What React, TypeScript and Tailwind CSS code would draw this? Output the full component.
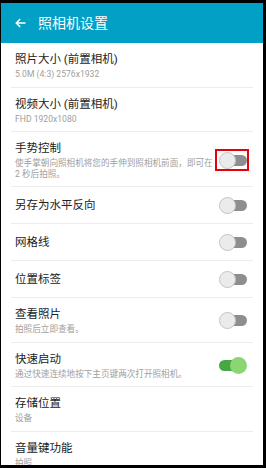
import React from 'react';

type Row = {
  title: string;
  sub?: string;
  toggle?: 'on' | 'off';
  marked?: boolean;
};

const rows: Row[] = [
  { title: '照片大小 (前置相机)', sub: '5.0M (4:3) 2576x1932' },
  { title: '视频大小 (前置相机)', sub: 'FHD 1920x1080' },
  {
    title: '手势控制',
    sub: '使手掌朝向照相机将您的手伸到照相机前面，即可在 2 秒后拍照。',
    toggle: 'off',
    marked: true,
  },
  { title: '另存为水平反向', toggle: 'off' },
  { title: '网格线', toggle: 'off' },
  { title: '位置标签', toggle: 'off' },
  { title: '查看照片', sub: '拍照后立即查看。', toggle: 'off' },
  { title: '快速启动', sub: '通过快速连续地按下主页键两次打开照相机。', toggle: 'on' },
  { title: '存储位置', sub: '设备' },
  { title: '音量键功能', sub: '拍照' },
];

function Toggle({ on, marked }: { on: boolean; marked?: boolean }) {
  return (
    <div className="relative w-[28px] h-[17px] shrink-0">
      {on ? (
        <>
          <div className="absolute left-0 top-[3px] w-[20px] h-[11px] rounded-full bg-[#47a744]" />
          <div className="absolute right-0 top-0 w-[17px] h-[17px] rounded-full bg-[#8bd673]" />
        </>
      ) : (
        <>
          <div className="absolute right-0 top-[3px] w-[20px] h-[11px] rounded-full bg-[#8e8e8e]" />
          <div className="absolute left-0 top-0 w-[17px] h-[17px] rounded-full bg-[#ebebeb] border border-[#c4c4c4]" />
        </>
      )}
      {marked && (
        <div className="absolute -left-[4px] -right-[2px] -top-[3px] -bottom-[2px] border-2 border-[#e8000b]" />
      )}
    </div>
  );
}

export default function App() {
  return (
    <div
      className="w-[266px] h-[468px] bg-black pt-[3px] pl-[1px] pr-[3px] pb-[3px]"
      style={{ fontFamily: 'Roboto, "Noto Sans CJK SC", sans-serif' }}
    >
      <div className="w-full h-full bg-white overflow-hidden flex flex-col">
        <div className="h-[40px] shrink-0 bg-[#03a0c6] flex items-center pl-[14px] gap-[12px]">
          <svg width="11" height="10" viewBox="0 0 11 10" fill="none">
            <path d="M10.5 5H1.2M5.2 1L1.2 5l4 4" stroke="white" strokeWidth="1.4" />
          </svg>
          <span className="text-white text-[14px] leading-[16px]">照相机设置</span>
        </div>
        <div className="flex flex-col">
          {rows.map((r) => (
            <div key={r.title} className="mx-[10px] border-b border-[#ececec]">
              <div
                className={`flex items-center gap-[6px] pl-[4px] pr-[6px] ${
                  r.sub ? 'pt-[9px] pb-[7px]' : 'h-[36px]'
                }`}
              >
                <div className="flex-1 min-w-0">
                  <div className="text-[11.5px] leading-[14px] text-[#222222]">{r.title}</div>
                  {r.sub && (
                    <div className="mt-[3px] text-[8.6px] leading-[10.5px] text-[#a0a0a0]">
                      {r.sub}
                    </div>
                  )}
                </div>
                {r.toggle && <Toggle on={r.toggle === 'on'} marked={r.marked} />}
              </div>
            </div>
          ))}
        </div>
      </div>
    </div>
  );
}
